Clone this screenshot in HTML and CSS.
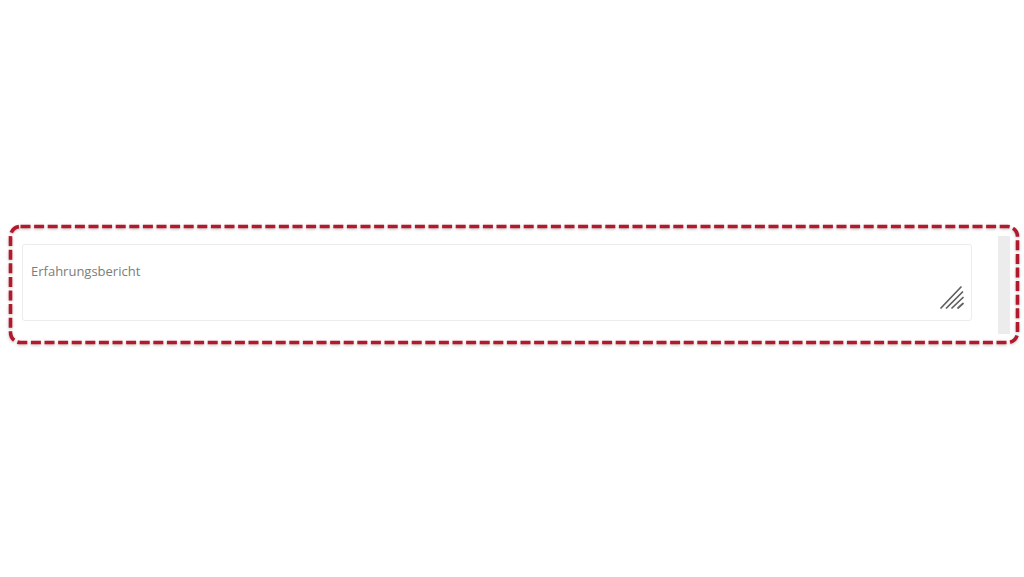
FILE: index.html
```html
<!DOCTYPE html>
<html lang="de">
<head>
<meta charset="utf-8">
<link rel="stylesheet" href="styles.css">
</head>
<body>
<div class="frame">
  <svg class="dash" width="1012" height="121" viewBox="0 0 1012 121">
    <rect x="2.5" y="2.5" width="1007" height="116" rx="10" ry="10" fill="none" stroke="#b3192c" stroke-width="3.6" stroke-dasharray="10 3.6"/>
  </svg>
  <div class="field">
    <div class="input">
      <span class="placeholder">Erfahrungsbericht</span>
      <svg class="grip" width="26" height="26" viewBox="0 0 26 26">
        <g stroke="#5f5f5f" stroke-width="1.7" stroke-linecap="round">
          <line x1="3" y1="24" x2="23" y2="3"/>
          <line x1="8.5" y1="24" x2="24.5" y2="8"/>
          <line x1="14" y1="24" x2="25" y2="13.5"/>
          <line x1="20" y1="24" x2="25" y2="19.5"/>
        </g>
      </svg>
    </div>
    <div class="strip"></div>
  </div>
</div>
</body>
</html>
```

FILE: styles.css
```css
html, body {
  margin: 0;
  padding: 0;
  background: #ffffff;
}
body {
  width: 1024px;
  height: 577px;
  overflow: hidden;
  font-family: "Open Sans", "Liberation Sans", sans-serif;
}
.frame {
  position: relative;
  margin: 224px 0 0 8px;
  width: 1012px;
  height: 121px;
  box-sizing: border-box;
  padding: 12px 10px 11px 14px;
}
.dash {
  position: absolute;
  left: 0;
  top: 0;
  filter: drop-shadow(0 1px 1.5px rgba(0,0,0,0.25));
}
.field {
  display: flex;
  gap: 26px;
  height: 98px;
}
.input {
  position: relative;
  flex: 0 0 950px;
  box-sizing: border-box;
  height: 77px;
  margin-top: 8px;
  border: 1px solid #ececec;
  border-radius: 3px;
  background: #fff;
  padding: 17px 8px;
}
.placeholder {
  display: block;
  font-size: 13px;
  line-height: 18px;
  color: #7c7c7c;
}
.grip {
  position: absolute;
  right: 7px;
  bottom: 10px;
}
.strip {
  flex: 0 0 12px;
  height: 98px;
  background: #ececec;
}
```
